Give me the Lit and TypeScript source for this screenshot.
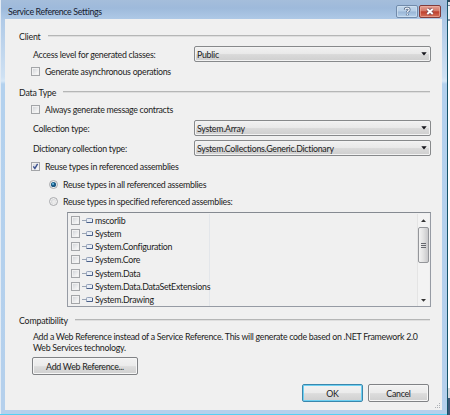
import { LitElement, html, css, svg } from "lit";
import { customElement, property } from "lit/decorators.js";

const textBase = css`
  :host { box-sizing: border-box; font: 8.8px/11px Lato, "Open Sans", sans-serif; letter-spacing: -.27px; color: #1c1c22; white-space: nowrap; }
  * { box-sizing: border-box; }
`;

@customElement("check-box")
class CheckBox extends LitElement {
  @property({ type: Boolean }) checked = false;
  static styles = [textBase, css`
    :host { display: flex; align-items: center; }
    .box { width: 9px; height: 9px; flex: none; border: 1px solid #a3a5a8; background: linear-gradient(135deg, #cdd0d4, #f7f7f7 80%); box-shadow: inset 0 0 0 1px #f1f1f1; }
    svg { display: block; }
    .text { margin-left: 5px; }
    :host([bare]) .text { display: none; }
  `];
  render() {
    return html`<span class="box">${this.checked
      ? html`<svg width="7" height="7" viewBox="0 0 7 7"><path d="M1.3 3.3 2.9 5.4 5.6.9" fill="none" stroke="#3b518f" stroke-width="1.4"/></svg>` : ""}</span>
      <span class="text"><slot></slot></span>`;
  }
}

@customElement("radio-button")
class RadioButton extends LitElement {
  @property({ type: Boolean }) checked = false;
  static styles = [textBase, css`
    :host { display: flex; align-items: center; }
    svg { display: block; flex: none; margin-right: 5px; }
  `];
  render() {
    return html`<svg width="9" height="9" viewBox="0 0 9 9">
      <circle cx="4.5" cy="4.5" r="4" fill="#f0f0f0" stroke="#9fa2a5" stroke-width=".9"/>
      <circle cx="4.5" cy="4.5" r="2.6" fill="${this.checked ? "#1c5a85" : "#d9dadc"}"/>
      ${this.checked ? svg`<circle cx="4" cy="3.9" r="1.1" fill="#63b5dd"/>` : svg`<circle cx="5" cy="5" r="1.9" fill="#ebebeb"/>`}
    </svg><span><slot></slot></span>`;
  }
}

@customElement("drop-down")
class DropDown extends LitElement {
  static styles = [textBase, css`
    :host { display: flex; align-items: center; justify-content: space-between; width: 237px; height: 16px; padding: 0 3px 0 2px;
      border: 1px solid #87898b; border-radius: 2px; box-shadow: inset 0 0 0 1px #f3f3f3;
      background: linear-gradient(#f1f1f1, #e9e9e9 48%, #d9d9d9 54%, #cfcfcf); }
  `];
  render() {
    return html`<span><slot></slot></span><svg width="6" height="4" viewBox="0 0 6 4"><path d="M.3.3h5.4L3 3.6z" fill="#15151b"/></svg>`;
  }
}

@customElement("push-button")
class PushButton extends LitElement {
  static styles = [textBase, css`
    :host { display: flex; align-items: center; justify-content: center; height: 18px;
      border: 1px solid #808285; border-radius: 2px; box-shadow: inset 0 0 0 1px #f6f6f6;
      background: linear-gradient(#f2f2f2, #ebebeb 48%, #dcdcdc 54%, #d0d0d0); }
    :host([default]) { border-color: #3a87ad; box-shadow: inset 0 0 0 1px #6ed0f2; }
  `];
  render() { return html`<span><slot></slot></span>`; }
}

@customElement("group-heading")
class GroupHeading extends LitElement {
  static styles = [textBase, css`
    :host { display: flex; align-items: center; height: 14px; gap: 7px; margin: 0 12px 0 14px; letter-spacing: -.2px; }
    .rule { flex: 1; height: 2px; border-top: 1px solid #b5b6b6; border-bottom: 1px solid #dedede; margin-bottom: 1px; }
  `];
  render() { return html`<span><slot></slot></span><span class="rule"></span>`; }
}

const assemblies = ["mscorlib", "System", "System.Configuration", "System.Core", "System.Data", "System.Data.DataSetExtensions", "System.Drawing"];

@customElement("assembly-list")
class AssemblyList extends LitElement {
  static styles = [textBase, css`
    :host { display: grid; grid-template-columns: 141px 1fr 12px; width: 364px; height: 95px; border: 1px solid #969ba4; border-top-color: #858a91; background: #f0f0f0; padding: 1px; }
    .names { border-right: 1px solid #e3e6ea; padding: 0 0 0 2px; }
    .item { display: flex; align-items: center; height: 13.15px; }
    .pin { flex: none; margin: 0 1px 0 2px; }
    .bar { grid-column: 3; display: flex; flex-direction: column; align-items: center; background: #f3f3f3; border-left: 1px solid #e4e4e4; padding: 5px 0 4px; }
    .thumb { width: 11px; height: 36px; margin-top: 5px; border: 1px solid #94969a; border-radius: 2px; background: linear-gradient(90deg, #f3f3f3, #e3e3e3 45%, #c8c8ca); display: flex; flex-direction: column; justify-content: center; align-items: center; gap: 1px; }
    .thumb i { width: 5px; height: 1px; background: #66686e; }
    .down { margin-top: auto; }
    svg { display: block; }
  `];
  render() {
    return html`<div class="names">${assemblies.map(name => html`<div class="item"><check-box bare></check-box>
        <svg class="pin" width="12" height="9" viewBox="0 0 12 9"><path d="M0 4.5h4" stroke="#9aa5b5"/><rect x="4.5" y="2.5" width="6" height="4" rx=".8" fill="#e8edf5" stroke="#93a1b9"/><path d="M4.5 6.5h6V3" fill="none" stroke="#4a6089"/></svg>
        <span>${name}</span></div>`)}</div>
      <div class="bar"><svg width="5" height="3" viewBox="0 0 5 3"><path d="M0 3 2.5.2 5 3z" fill="#333"/></svg>
        <div class="thumb"><i></i><i></i><i></i></div>
        <svg class="down" width="5" height="3" viewBox="0 0 5 3"><path d="M0 0 2.5 2.8 5 0z" fill="#333"/></svg></div>`;
  }
}

@customElement("app-root")
class AppRoot extends LitElement {
  static styles = [textBase, css`
    :host { display: grid; grid-template-columns: 448px 2px; width: 450px; height: 415px; overflow: hidden; }
    .desk { background: linear-gradient(#36495e 0 2px, #dfe4ec 2px 5px, #7b879b 5px 6px, #f1f2f5 6px 19px, #8c96aa 19px 21px, #fff 21px 388px, #d5d8de 388px 398px, #3d5879 398px); }
    .window { display: flex; flex-direction: column; padding: 0 5px 5px; position: relative;
      border-right: 1px solid #165469;
      background: linear-gradient(#54d0f3, #54d0f3) left bottom / 100% 1px no-repeat,
        linear-gradient(#e3ebf4, #e3ebf4) left top / 1px 100% no-repeat,
        linear-gradient(#a5bedb 0, #9ebadb 8px, #b0cae7 20px, #cfe1f3 77px, #d7e8f7 81px, #b3d1ee 84px, #b5d0ec 100%); }
    .title { display: flex; height: 19px; flex: none; padding: 5px 1px 0 3px; justify-content: space-between; color: #16202e; }
    .title span { line-height: 14px; letter-spacing: -.33px; }
    .caption { display: flex; gap: 1px; }
    .caption svg { display: block; }
    .client { flex: 1; background: #f0f0f0; display: flex; flex-direction: column; padding-top: 10px; position: relative; }
    .row { display: flex; align-items: center; justify-content: space-between; padding: 0 11px 0 28px; height: 16px; flex: none; }
    .check { padding-left: 26px; height: 13px; flex: none; }
    .radio { padding-left: 44px; height: 13px; flex: none; }
    .access { margin-top: 3px; }
    .generate { margin-top: 3px; }
    .data { margin-top: 7px; }
    .always { margin-top: 4px; }
    .collection { margin-top: 4px; }
    .dictionary { margin-top: 4px; }
    .reuse { margin-top: 4px; }
    .all { margin-top: 5px; }
    .specified { margin-top: 4px; }
    .list { margin: 4px 0 0 62px; flex: none; }
    .compat { margin-top: 6px; }
    .note { margin: 4px 0 0 28px; line-height: 11px; height: 22px; }
    .add { width: 106px; margin: 4px 0 0 27px; }
    .footer { display: flex; justify-content: flex-end; gap: 5px; margin: 9px 13px 0 0; }
    .footer push-button { width: 61px; }
    .grip { position: absolute; right: 1px; bottom: 1px; }
  `];
  render() {
    return html`<div class="window">
      <div class="title"><span>Service Reference Settings</span>
        <div class="caption">
          <svg width="22" height="13" viewBox="0 0 22 13"><defs><linearGradient id="h" x2="0" y2="1"><stop stop-color="#c3d7eb"/><stop offset=".48" stop-color="#b5cde6"/><stop offset=".52" stop-color="#98b5d5"/><stop offset="1" stop-color="#b9d3ed"/></linearGradient></defs>
            <rect x=".5" y=".5" width="21" height="12" rx="1.5" fill="url(#h)" stroke="#718bab"/><rect x="1.5" y="1.5" width="19" height="10" rx="1" fill="none" stroke="#d6e5f3" stroke-opacity=".65"/>
            <path d="M9.2 4.8c0-2.2 4-2.2 4 0 0 1.3-1.9 1.3-1.9 2.5M11.3 8.7v1.5" fill="none" stroke="#526783" stroke-width="2.7"/><path d="M9.2 4.8c0-2.2 4-2.2 4 0 0 1.3-1.9 1.3-1.9 2.5M11.3 8.7v1.3" fill="none" stroke="#f5f7fb" stroke-width="1.2"/></svg>
          <svg width="22" height="13" viewBox="0 0 22 13"><defs><linearGradient id="c" x2="0" y2="1"><stop stop-color="#e5a39a"/><stop offset=".46" stop-color="#d37867"/><stop offset=".52" stop-color="#bd3e2c"/><stop offset="1" stop-color="#d8775f"/></linearGradient></defs>
            <rect x=".5" y=".5" width="21" height="12" rx="1.5" fill="url(#c)" stroke="#803c3c"/><rect x="1.5" y="1.5" width="19" height="10" rx="1" fill="none" stroke="#efb6a7" stroke-opacity=".6"/>
            <path d="m8.5 4 5 5m0-5-5 5" stroke="#704653" stroke-width="3.3"/><path d="m8.3 4 5.4 5m0-5-5.4 5" stroke="#fff" stroke-width="1.9"/></svg>
        </div></div>
      <div class="client">
        <group-heading>Client</group-heading>
        <div class="row access"><span>Access level for generated classes:</span><drop-down>Public</drop-down></div>
        <check-box class="check generate">Generate asynchronous operations</check-box>
        <group-heading class="data">Data Type</group-heading>
        <check-box class="check always">Always generate message contracts</check-box>
        <div class="row collection"><span>Collection type:</span><drop-down>System.Array</drop-down></div>
        <div class="row dictionary"><span>Dictionary collection type:</span><drop-down>System.Collections.Generic.Dictionary</drop-down></div>
        <check-box class="check reuse" checked>Reuse types in referenced assemblies</check-box>
        <radio-button class="radio all" checked>Reuse types in all referenced assemblies</radio-button>
        <radio-button class="radio specified">Reuse types in specified referenced assemblies:</radio-button>
        <assembly-list class="list"></assembly-list>
        <group-heading class="compat">Compatibility</group-heading>
        <div class="note">Add a Web Reference instead of a Service Reference. This will generate code based on .NET Framework 2.0<br>Web Services technology.</div>
        <push-button class="add">Add Web Reference...</push-button>
        <div class="footer"><push-button default>OK</push-button><push-button>Cancel</push-button></div>
        <svg class="grip" width="6" height="6" viewBox="0 0 6 6"><path d="M4 0h1v1H4zM2 2h1v1H2zM4 2h1v1H4zM0 4h1v1H0zM2 4h1v1H2zM4 4h1v1H4z" fill="#adb0b5"/></svg>
      </div></div><div class="desk"></div>`;
  }
}
